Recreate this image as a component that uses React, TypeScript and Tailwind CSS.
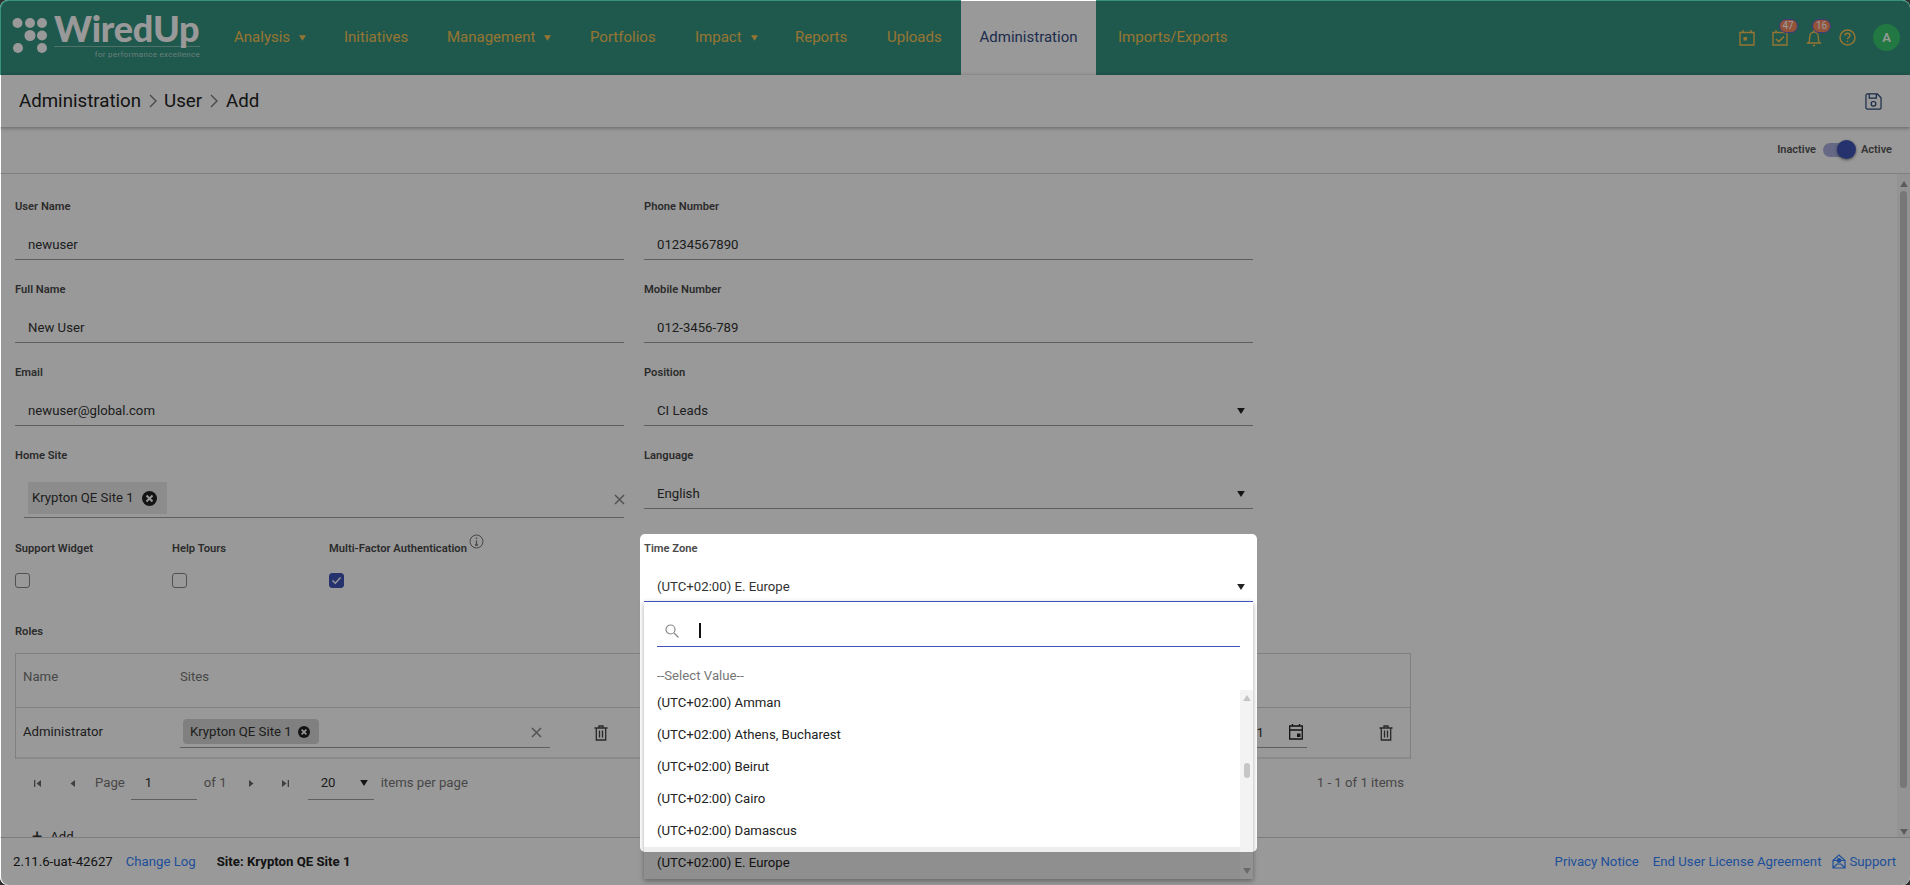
import type { ReactNode } from "react";

const navItems = [
	{ label: "Analysis", caret: true, width: "w-[110px]" },
	{ label: "Initiatives", width: "w-[103px]" },
	{ label: "Management", caret: true, width: "w-[143px]" },
	{ label: "Portfolios", width: "w-[105px]" },
	{ label: "Impact", caret: true, width: "w-[100px]" },
	{ label: "Reports", width: "w-[92px]" },
	{ label: "Uploads", width: "w-[74px]" },
];

const timeZones = ["Amman", "Athens, Bucharest", "Beirut", "Cairo", "Damascus"];

const labelClass = "h-[14px] whitespace-nowrap text-[11.2px] font-semibold leading-[14px] text-[#4a4a4a]";

function Caret({ className = "" }: { className?: string }) {
	return (
		<svg width="8" height="6" viewBox="0 0 9 7" className={className}>
			<path d="M0 0h9L4.500 7z" fill="currentColor" />
		</svg>
	);
}

function Logo() {
	return (
		<div className="relative h-[75px] w-[234px] flex-none">
			<svg width="50" height="60" viewBox="0 0 50 60" className="absolute left-0 top-0 text-white">
				<g fill="currentColor">
					<circle cx="17.500" cy="23" r="5" />
					<circle cx="30" cy="23" r="5" />
					<circle cx="42" cy="23" r="5" />
					<circle cx="30" cy="35.500" r="5.500" />
					<circle cx="42" cy="35.500" r="5" />
					<circle cx="18" cy="48" r="5" />
					<circle cx="42" cy="48" r="5" />
				</g>
			</svg>
			<span className="absolute left-[54px] top-[11px] font-['Lato'] text-[36px] font-black leading-[34px] tracking-[-0.2px] text-white">
				WiredUp
			</span>
			<div className="absolute left-[54px] top-[46px] h-px w-[146px] bg-white/40" />
			<span className="absolute right-[34px] top-[50px] text-[8px] leading-[10px] tracking-[0.3px] text-white/60">
				for performance excellence
			</span>
		</div>
	);
}

function HeaderIcon({ badge, children }: { badge?: string; children: ReactNode }) {
	return (
		<div className="relative flex w-[33.500px] justify-center text-[#f7c455]">
			{children}
			{badge && (
				<span className="absolute left-[15px] top-[-10px] flex h-[14px] w-[19px] items-center justify-center rounded-full border border-[#6a5fd0] bg-[#f58a5f] text-[10px] leading-none text-white">
					{badge}
				</span>
			)}
		</div>
	);
}

function Header() {
	return (
		<header className="flex h-[75px] flex-none items-stretch bg-[#35937f] font-['Roboto'] text-[15px]">
			<Logo />
			<nav className="flex items-stretch">
				{navItems.map((item) => (
					<div key={item.label} className={`flex items-center text-[#f7c455] ${item.width}`}>
						<span>{item.label}</span>
						{item.caret && <Caret className="ml-[9px] h-[6px] w-[7px]" />}
					</div>
				))}
				<div className="flex w-[135px] items-center justify-center bg-white text-[#334a80]">
					Administration
				</div>
				<div className="flex items-center pl-[22px] text-[#f7c455]">Imports/Exports</div>
			</nav>
			<div className="ml-auto flex items-center pr-[10px]">
				<HeaderIcon>
					<svg width="16" height="17" viewBox="0 0 16 17" fill="none" stroke="currentColor" strokeWidth="1.400">
						<path d="M1 3.500h14v12.500H1zM4 1v3M12 1v3" />
						<rect x="4.500" y="8" width="3.500" height="3.500" fill="currentColor" stroke="none" />
					</svg>
				</HeaderIcon>
				<HeaderIcon badge="47">
					<svg width="16" height="17" viewBox="0 0 16 17" fill="none" stroke="currentColor" strokeWidth="1.400">
						<path d="M1 3.500h14v12.500H1zM4 1v3M12 1v3" />
						<path d="M4 10l2.800 2.600L12 7.500" strokeWidth="1.600" />
					</svg>
				</HeaderIcon>
				<HeaderIcon badge="16">
					<svg width="16" height="18" viewBox="0 0 16 18" fill="none" stroke="currentColor" strokeWidth="1.400">
						<path d="M.8 14h14.400M2.600 14c1-1.400 1-3 1-5.200C3.600 5.500 5.400 3 8 3s4.400 2.500 4.400 5.800c0 2.200 0 3.800 1 5.200" />
						<path d="M8 1v2M6.800 16.500h2.400" />
					</svg>
				</HeaderIcon>
				<HeaderIcon>
					<svg width="17" height="17" viewBox="0 0 17 17" fill="none" stroke="currentColor" strokeWidth="1.500">
						<circle cx="8.500" cy="8.500" r="7.500" />
						<path d="M6 6.600c0-1.500 1.100-2.400 2.500-2.400s2.500.9 2.500 2.200c0 1.900-2.500 1.800-2.500 3.900" />
						<path d="M8.500 11.700v1.500" />
					</svg>
				</HeaderIcon>
				<div className="ml-[9px] flex h-[27px] w-[27px] items-center justify-center rounded-full bg-[#38c870] text-[13px] font-medium text-white">
					A
				</div>
			</div>
		</header>
	);
}

function Field({ label, value, select }: { label: string; value: string; select?: boolean }) {
	return (
		<div>
			<div className={labelClass}>{label}</div>
			<div className="mt-[12px] flex h-[34px] items-center justify-between border-b border-[#9e9e9e] pl-[13px] pr-[8px] pt-[4px] text-[#333]">
				<span>{value}</span>
				{select && <Caret className="text-[#222]" />}
			</div>
		</div>
	);
}

function ClearIcon() {
	return (
		<svg width="11" height="11" viewBox="0 0 11 11" stroke="#8a8a8a" strokeWidth="1.500">
			<path d="M1 1l9 9M10 1l-9 9" />
		</svg>
	);
}

function ChipRemove({ size }: { size: number }) {
	return (
		<svg width={size} height={size} viewBox="0 0 14 14">
			<circle cx="7" cy="7" r="7" fill="#222" />
			<path d="M4.200 4.200l5.600 5.600M9.800 4.200l-5.600 5.600" stroke="#fff" strokeWidth="1.800" />
		</svg>
	);
}

function TrashIcon() {
	return (
		<svg width="14" height="16" viewBox="0 0 14 16" fill="none" stroke="#444" strokeWidth="1.300">
			<path d="M.5 3h13M5 3V1h4v2M2.300 3v12h9.400V3M5.500 5.500v7M8.500 5.500v7" />
		</svg>
	);
}

function CheckField({ label, width, checked, info }: { label: string; width: string; checked?: boolean; info?: boolean }) {
	return (
		<div className={width}>
			<div className={`relative ${labelClass}`}>
				{label}
				{info && (
					<svg width="15" height="15" viewBox="0 0 15 15" fill="none" className="absolute left-[140px] top-[-8px]" stroke="#777">
						<circle cx="7.500" cy="7.500" r="6.500" />
						<path d="M7.500 6.500v4.500M6 11h3M7.500 3.500v1.500" strokeWidth="1.300" />
					</svg>
				)}
			</div>
			<div
				className={`mt-[17px] flex h-[15px] w-[15px] items-center justify-center rounded-[3px] border ${
					checked ? "border-[#4054b8] bg-[#4054b8]" : "border-[#888] bg-white"
				}`}
			>
				{checked && (
					<svg width="11" height="9" viewBox="0 0 11 9" fill="none" stroke="#fff" strokeWidth="1.400">
						<path d="M1.500 4.500l2.800 2.800L9.500 1.500" />
					</svg>
				)}
			</div>
		</div>
	);
}

function PagerIcon({ dir, bar, className }: { dir: "left" | "right"; bar?: boolean; className: string }) {
	return (
		<svg width="9" height="9" viewBox="0 0 9 9" fill="#6a6a6a" className={`flex-none ${className}`}>
			{dir === "left" ? <path d="M8 1v7L3.500 4.500z" /> : <path d="M1 1v7l4.500-3.500z" />}
			{bar && (dir === "left" ? <path d="M1 1h1.300v7H1z" /> : <path d="M6.700 1H8v7H6.700z" />)}
		</svg>
	);
}

function RolesTable() {
	return (
		<div className="w-[1396px] border border-b-0 border-[#d6d6d6]">
			<div className="flex h-[54px] items-center border-b border-[#d6d6d6] pb-[8px] text-[#777]">
				<div className="w-[164px] pl-[7px]">Name</div>
				<div>Sites</div>
			</div>
			<div className="flex h-[51px] border-b-[2px] border-b-[#e8e8e8] text-[#333]">
				<div className="w-[164px] self-center pb-[2px] pl-[7px]">Administrator</div>
				<div className="flex h-[40px] w-[370px] items-start justify-between border-b border-[#9e9e9e] pl-[3px] pr-[8px] pt-[11px]">
					<div className="flex h-[25px] w-[136px] items-center gap-[6px] rounded-[4px] bg-[#d5d5d5] pl-[7px]">
						<span>Krypton QE Site 1</span>
						<ChipRemove size={12} />
					</div>
					<div className="pt-[8px]">
						<ClearIcon />
					</div>
				</div>
				<div className="ml-[44px] flex-none self-center">
					<TrashIcon />
				</div>
				<div className="ml-auto flex h-[40px] w-[160px] items-start justify-end gap-[25px] border-b border-[#9e9e9e] pr-[4px] pt-[15px]">
					<span>12/31/2031</span>
					<svg width="14" height="17" viewBox="0 0 14 17" fill="none" stroke="#222" strokeWidth="1.300">
						<path d="M.7 3h12.600v13H.7zM.7 7h12.600M3.500 1v2M10.500 1v2" />
						<rect x="8" y="10.500" width="3.500" height="3.500" fill="#222" stroke="none" />
					</svg>
				</div>
				<div className="w-[103px] flex-none self-center pl-[72px]">
					<TrashIcon />
				</div>
			</div>
		</div>
	);
}

function Pager() {
	return (
		<div className="flex h-[48px] w-[1396px] items-center text-[#777]">
			<PagerIcon dir="left" bar className="ml-[18px]" />
			<PagerIcon dir="left" className="ml-[25px]" />
			<span className="ml-[19px]">Page</span>
			<div className="ml-[6px] flex h-[34px] w-[66px] items-center border-b border-[#9e9e9e] pl-[14px] text-[#333]">1</div>
			<span className="ml-[7px]">of 1</span>
			<PagerIcon dir="right" className="ml-[21px]" />
			<PagerIcon dir="right" bar className="ml-[24px]" />
			<div className="ml-[18px] flex h-[34px] w-[66px] items-center justify-between border-b border-[#9e9e9e] pl-[13px] pr-[6px] text-[#333]">
				<span>20</span>
				<Caret className="text-[#222]" />
			</div>
			<span className="ml-[7px]">items per page</span>
			<span className="ml-auto pr-[7px]">1 - 1 of 1 items</span>
		</div>
	);
}

function TimeZoneField() {
	return (
		<div className="relative z-20">
			<Field label="Time Zone" value="(UTC+02:00) E. Europe" select />
			<div className="absolute left-0 top-[59px] h-[278px] w-[609px] overflow-hidden border-t-[1.500px] border-t-[#4054b8] bg-white shadow-[0_2px_5px_rgba(0,0,0,0.35)]">
				<div className="mx-[13px] mt-[13px] flex h-[32px] items-center border-b border-[#4054b8] pl-[8px]">
					<svg width="14" height="14" viewBox="0 0 14 14" fill="none" stroke="#888" strokeWidth="1.200">
						<circle cx="5.500" cy="5.500" r="4.500" />
						<path d="M9 9l4.500 4.500" />
					</svg>
					<div className="ml-[20px] h-[15px] w-[1.500px] bg-[#111]" />
				</div>
				<div className="h-[40px] pl-[13px] pt-[19px] text-[#777]">--Select Value--</div>
				<div className="relative text-[#222]">
					{timeZones.map((zone) => (
						<div key={zone} className="flex h-[32px] items-center pl-[13px]">
							(UTC+02:00) {zone}
						</div>
					))}
					<div className="flex h-[32px] items-center bg-[#eeeeee] pl-[13px]">(UTC+02:00) E. Europe</div>
					<div className="absolute bottom-0 right-0 top-[3px] flex w-[13px] flex-col items-center bg-[#f3f3f3] pt-[5px]">
						<Caret className="rotate-180 text-[#c4c4c4]" />
						<div className="mt-[62px] h-[15px] w-[6px] rounded-full bg-[#c6c6c6]" />
						<Caret className="mb-[5px] mt-auto text-[#b0b0b0]" />
					</div>
				</div>
			</div>
		</div>
	);
}

function UserForm() {
	return (
		<main className="relative min-h-0 flex-1 pl-[15px] pt-[26px]">
			<div className="absolute bottom-0 right-0 top-0 flex w-[13px] flex-col items-center bg-[#f5f5f5] pt-[7px]">
				<Caret className="rotate-180 text-[#999]" />
				<div className="mt-[4px] h-[597px] w-[7px] rounded-full bg-[#c6c6c6]" />
				<Caret className="mb-[2px] mt-auto text-[#999]" />
			</div>
			<div className="grid w-[1238px] grid-cols-2 gap-x-[20px] gap-y-[23px]">
				<Field label="User Name" value="newuser" />
				<Field label="Phone Number" value="01234567890" />
				<Field label="Full Name" value="New User" />
				<Field label="Mobile Number" value="012-3456-789" />
				<Field label="Email" value="newuser@global.com" />
				<Field label="Position" value="CI Leads" select />
				<div className="h-[70px]">
					<div className={labelClass}>Home Site</div>
					<div className="ml-[9px] mt-[18px] flex h-[37px] items-start justify-between border-b border-[#9e9e9e] pl-[4px] pr-[1px] pt-[1px]">
						<div className="flex h-[32px] w-[139px] items-center gap-[8px] bg-[#e9e9e9] pl-[4px] text-[#333]">
							<span>Krypton QE Site 1</span>
							<ChipRemove size={15} />
						</div>
						<div className="-mr-[2px] pt-[12px]">
							<ClearIcon />
						</div>
					</div>
				</div>
				<Field label="Language" value="English" select />
				<div className="flex">
					<CheckField label="Support Widget" width="w-[157px]" />
					<CheckField label="Help Tours" width="w-[157px]" />
					<CheckField label="Multi-Factor Authentication" width="w-[157px]" checked info />
				</div>
				<TimeZoneField />
			</div>
			<div className={`mt-[23px] ${labelClass}`}>Roles</div>
			<div className="mt-[14px]">
				<RolesTable />
				<Pager />
				<div className="mt-[20px] flex items-center pl-[17px] text-[#333]">
					<span className="text-[18px] leading-[18px]">+</span>
					<span className="ml-[8px]">Add</span>
				</div>
			</div>
		</main>
	);
}

function Footer() {
	return (
		<footer className="relative z-[5] flex h-[48px] flex-none items-center border-t border-[#d0d0d0] bg-white pl-[13px] pr-[14px] text-[#222]">
			<span>2.11.6-uat-42627</span>
			<span className="ml-[13px] text-[#3585ff]">Change Log</span>
			<span className="ml-[21px] font-bold">Site: Krypton QE Site 1</span>
			<div className="ml-auto flex items-center text-[#3585ff]">
				<span>Privacy Notice</span>
				<span className="ml-[14px]">End User License Agreement</span>
				<svg width="14" height="15" viewBox="0 0 14 15" fill="none" stroke="currentColor" strokeWidth="1.200" className="ml-[11px]">
					<path d="M1 6.500h12V14H1zM1 6.500L7 1l6 5.500M1 14l4-4h4l4 4" />
					<circle cx="7" cy="6.500" r="1.800" fill="currentColor" />
				</svg>
				<span className="ml-[3px]">Support</span>
			</div>
		</footer>
	);
}

export default function App() {
	return (
		<div className="relative h-[885px] w-[1910px] overflow-hidden bg-[#2f2f2f] font-['Roboto',sans-serif] text-[13.200px]">
			<div className="flex h-full flex-col overflow-hidden rounded-[8px] bg-white">
				<Header />
				<div className="relative z-[2] flex h-[52px] flex-none items-center justify-between bg-white pl-[19px] pr-[28px] text-[18.700px] text-[#222] shadow-[0_1px_4px_rgba(0,0,0,0.35)]">
					<div className="flex items-center">
						<span>Administration</span>
						<svg width="10" height="16" viewBox="0 0 10 16" fill="none" stroke="#777" strokeWidth="1.300" className="mx-[6.500px]">
							<path d="M2 2l6 6-6 6" />
						</svg>
						<span>User</span>
						<svg width="10" height="16" viewBox="0 0 10 16" fill="none" stroke="#777" strokeWidth="1.300" className="mx-[7px]">
							<path d="M2 2l6 6-6 6" />
						</svg>
						<span>Add</span>
					</div>
					<svg width="17" height="17" viewBox="0 0 18 18" fill="none" stroke="#2c4a78" strokeWidth="1.300">
						<path d="M1 2.500A1.500 1.500 0 0 1 2.500 1H13l4 4v10.500a1.500 1.500 0 0 1-1.500 1.500h-13A1.500 1.500 0 0 1 1 15.500z" />
						<path d="M4.500 1v4.500h7.500V1" />
						<circle cx="9" cy="11.500" r="2.500" />
					</svg>
				</div>
				<div className="flex h-[47px] flex-none items-center justify-end border-b border-[#d6d6d6] pr-[18px] text-[11px] font-semibold text-[#555]">
					<span>Inactive</span>
					<div className="relative ml-[7px] h-[14px] w-[30px] rounded-full bg-[#a8b0e0]">
						<div className="absolute right-[-3px] top-[-3px] h-[19px] w-[19px] rounded-full bg-[#4054b8] shadow-[0_1px_3px_rgba(0,0,0,0.5)]" />
					</div>
					<span className="ml-[8px]">Active</span>
				</div>
				<UserForm />
				<Footer />
			</div>
			{/* white patch behind the spotlighted field, then the dim layer with a hole in it */}
			<div className="absolute left-[640px] top-[534px] z-10 h-[318px] w-[617px] rounded-[5px] bg-white" />
			<div className="absolute bottom-0 left-[1px] right-0 top-[1px] z-30 overflow-hidden rounded-[8px]">
				<div className="absolute left-[639px] top-[533px] h-[318px] w-[617px] rounded-[5px] shadow-[0_0_0_2000px_rgba(0,0,0,0.4)]" />
			</div>
		</div>
	);
}
